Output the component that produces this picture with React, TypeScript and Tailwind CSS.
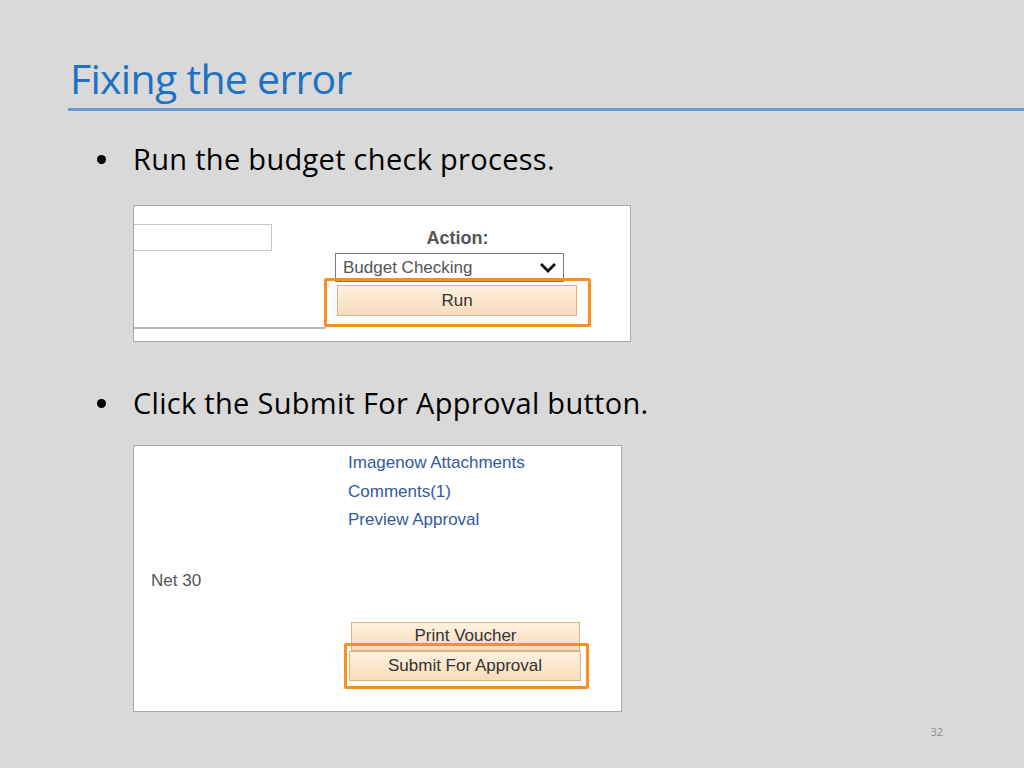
const slideFont = { fontFamily: '"Open Sans", "Liberation Sans", sans-serif' };
const appFont = { fontFamily: '"Liberation Sans", Arial, sans-serif' };

function Bullet({ children }: { children: React.ReactNode }) {
  return (
    <div className="flex items-center text-[29px] leading-[42px] text-black tracking-[0.3px]" style={slideFont}>
      <span className="ml-[11px] w-[9px] h-[9px] rounded-full bg-black" />
      <span className="ml-[27px]">{children}</span>
    </div>
  );
}

function PsButton({ label, className = "" }: { label: string; className?: string }) {
  return (
    <div
      className={`flex items-center justify-center border border-[#d8b48e] bg-gradient-to-b from-[#fdf1e0] to-[#f8dcb9] text-[17px] text-[#333] ${className}`}
    >
      {label}
    </div>
  );
}

function BudgetShot() {
  return (
    <div className="relative flex w-[498px] h-[137px] bg-white border border-[#a8a8a8]" style={appFont}>
      <div className="w-[192px] flex flex-col">
        <div className="mt-[18px] w-[138px] h-[27px] border border-l-0 border-[#c6c6c6]" />
        <div className="mt-auto mb-[12px] h-[2px] bg-[#b8b8b8]" />
      </div>
      <div className="ml-[9px] flex flex-col">
        <div className="mt-[19px] pl-[3px] text-center text-[18px] font-bold text-[#555]">Action:</div>
        <div className="mt-[1px] w-[229px] h-[29px] border border-[#7c7c7c] flex items-center justify-between pl-[7px] pr-[6px] text-[17px] leading-[20px] text-[#555]">
          <span>Budget Checking</span>
          <svg width="18" height="12" viewBox="0 0 18 12">
            <polyline points="2,2 9,9 16,2" fill="none" stroke="#111" strokeWidth="2.8" />
          </svg>
        </div>
        <PsButton label="Run" className="mt-[3px] ml-[2px] w-[240px] h-[31px]" />
      </div>
      <div className="absolute left-[190px] top-[72px] w-[267px] h-[49px] border-[3px] border-[#f7901e] rounded-[2px]" />
    </div>
  );
}

function SubmitShot() {
  return (
    <div className="relative flex flex-col w-[489px] h-[267px] bg-white border border-[#a8a8a8]" style={appFont}>
      <div className="ml-[214px] mt-[7px] flex flex-col gap-[8px] text-[17px] text-[#33599f] leading-[20.5px]">
        <span>Imagenow Attachments</span>
        <span>Comments(1)</span>
        <span>Preview Approval</span>
      </div>
      <div className="ml-[17px] mt-[40px] text-[17px] text-[#555] leading-[20px]">Net 30</div>
      <div className="ml-[215px] mt-[31px] flex flex-col">
        <PsButton label="Print Voucher" className="ml-[2px] w-[229px] h-[29px]" />
        <PsButton label="Submit For Approval" className="w-[232px] h-[30px]" />
      </div>
      <div className="absolute left-[210px] top-[197px] w-[245px] h-[46px] border-[3px] border-[#f7901e] rounded-[2px]" />
    </div>
  );
}

export default function App() {
  return (
    <div className="w-[1024px] h-[768px] bg-[#d9d9d9] flex flex-col overflow-hidden">
      <h1
        className="ml-[70px] mt-[52px] text-[41px] leading-[52px] text-[#1e72c3] tracking-[-0.7px]"
        style={slideFont}
      >
        Fixing the error
      </h1>
      <div className="ml-[68px] mt-[4px] h-[3px] bg-[#6b9bd2]" />
      <div className="ml-[86px] mt-[27px]">
        <Bullet>Run the budget check process.</Bullet>
      </div>
      <div className="ml-[133px] mt-[25px]">
        <BudgetShot />
      </div>
      <div className="ml-[86px] mt-[40px]">
        <Bullet>Click the Submit For Approval button.</Bullet>
      </div>
      <div className="ml-[133px] mt-[21px]">
        <SubmitShot />
      </div>
      <div className="flex justify-end mr-[81px] mt-[12px] text-[11px] text-[#8c8c8c]" style={slideFont}>
        32
      </div>
    </div>
  );
}
